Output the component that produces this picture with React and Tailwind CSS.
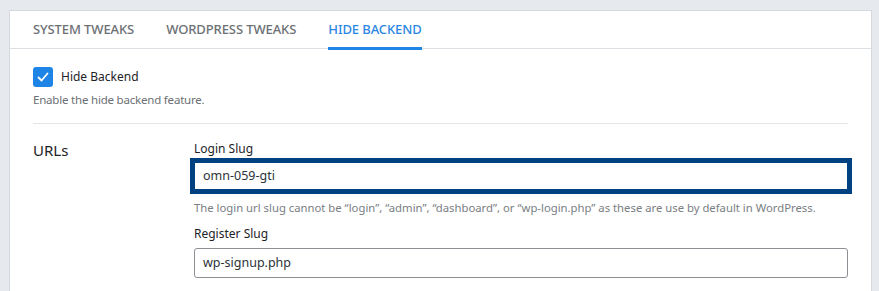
import React from "react";

const font = { fontFamily: '"Noto Sans", "Open Sans", sans-serif' };

function Tab({ label, active }) {
  return (
    <div
      className={
        "relative flex h-[37px] items-center text-[13px] font-medium tracking-[-0.1px] " +
        (active ? "text-[#2b87e3]" : "text-[#6c7075]")
      }
    >
      {label}
      {active && (
        <span className="absolute bottom-[-2px] left-0 right-0 h-[3px] bg-[#1e85e6]" />
      )}
    </div>
  );
}

export default function App() {
  return (
    <div className="h-[291px] w-[879px] overflow-hidden bg-[#e6e9ed] pl-[9px] pr-[7px] pt-[10px]" style={font}>
      <div className="h-[300px] border border-[#d5d8dc] bg-white">
        <div className="flex gap-[32px] border-b border-[#dcdfe3] px-[23px]">
          <Tab label="SYSTEM TWEAKS" />
          <Tab label="WORDPRESS TWEAKS" />
          <Tab label="HIDE BACKEND" active />
        </div>
        <div className="px-[23px]">
          <label className="mt-[17px] flex items-center gap-[8px]">
            <span className="flex h-[20px] w-[20px] items-center justify-center rounded-[3px] bg-[#1e85e6]">
              <svg width="14" height="14" viewBox="0 0 14 14" fill="none">
                <path d="M2.5 7.5 L5.6 10.5 L11.5 3.5" stroke="white" strokeWidth="1.8" strokeLinecap="round" strokeLinejoin="round" />
              </svg>
            </span>
            <span className="text-[12px] leading-[22px] text-[#1d2327]">Hide Backend</span>
          </label>
          <p className="mt-[3px] text-[11.5px] leading-[18px] tracking-[-0.2px] text-[#6c7075]">Enable the hide backend feature.</p>
          <div className="mt-[14px] h-px bg-[#e3e6e9]" />
          <div className="mt-[16px] flex">
            <div className="w-[161px] text-[15px] leading-[20px] text-[#1d2327]">URLs</div>
            <div className="flex-1">
              <div className="text-[12px] leading-[18px] text-[#1d2327]">Login Slug</div>
              <div className="-mx-[4px] mt-[0px] flex h-[36px] items-center border-[5px] border-[#004182] bg-white pl-[8px] text-[12.5px] text-[#2c3338]">
                omn-059-gti
              </div>
              <p className="mt-[6px] whitespace-nowrap text-[11.3px] leading-[16px] text-[#7a7e83]">
                The login url slug cannot be “login”, “admin”, “dashboard”, or “wp-login.php” as these are use by default in WordPress.
              </p>
              <div className="mt-[9px] text-[12px] leading-[18px] text-[#1d2327]">Register Slug</div>
              <div className="mt-[5px] flex h-[30px] items-center rounded-[3px] border border-[#8c8f94] bg-white pl-[8px] text-[12.5px] text-[#2c3338]">
                wp-signup.php
              </div>
            </div>
          </div>
        </div>
      </div>
    </div>
  );
}
